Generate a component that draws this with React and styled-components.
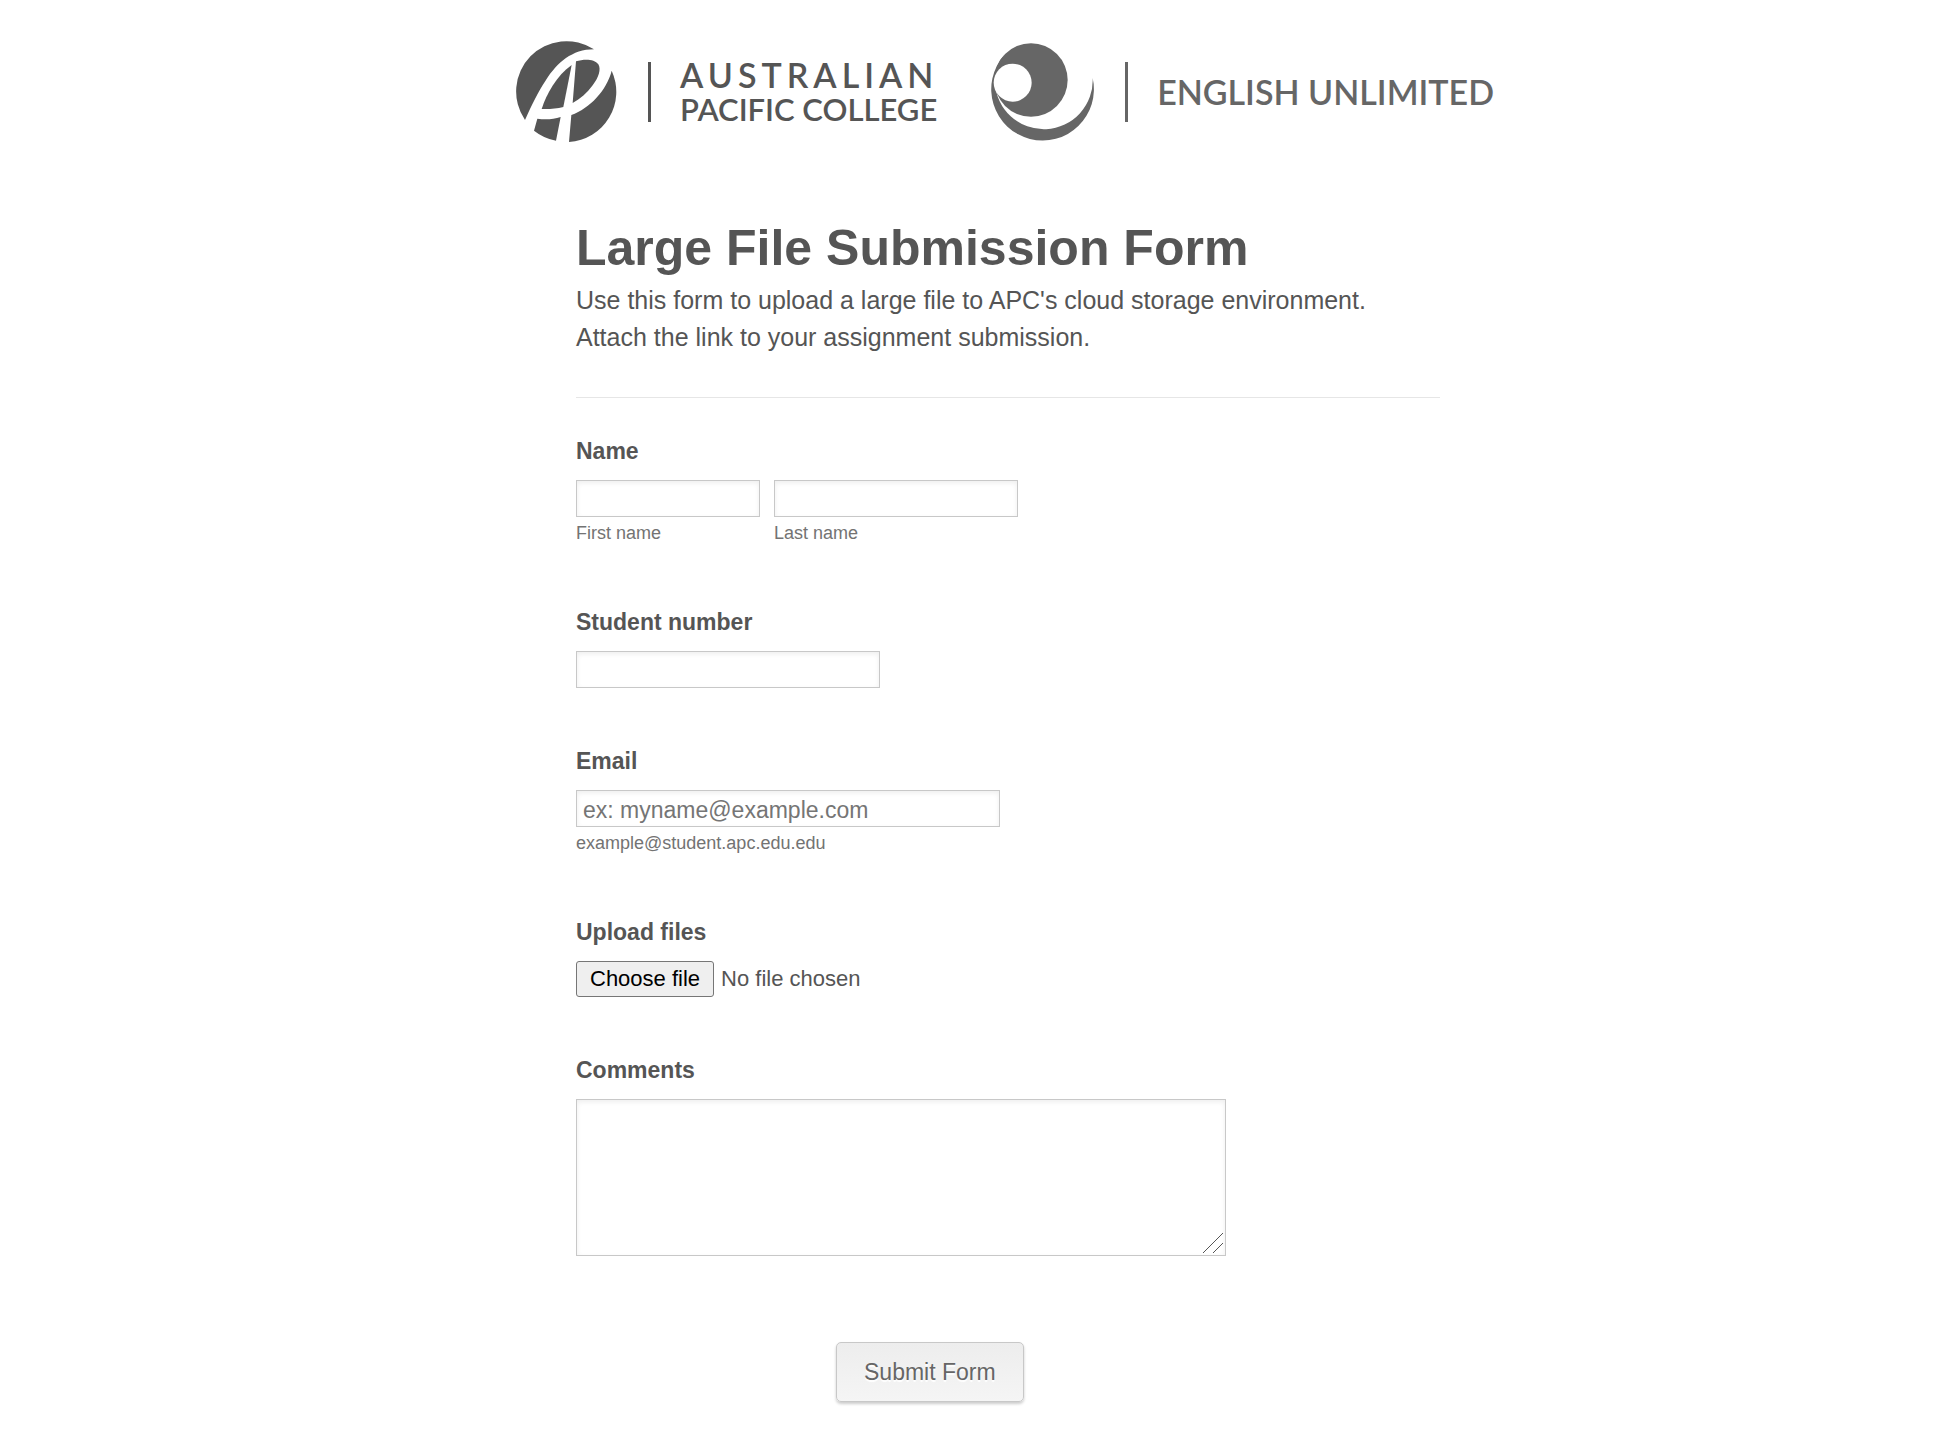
import React, { useRef, useState } from 'react';
import styled, { createGlobalStyle } from 'styled-components';

const GlobalStyle = createGlobalStyle`
  body {
    margin: 0;
    background-color: #fff;
    color: #555;
    font-family: 'Liberation Sans', Arial, sans-serif;
  }

  *, *::before, *::after {
    box-sizing: border-box;
  }

  input, textarea, button {
    font-family: inherit;
  }
`;

const Page = styled.div`
  max-width: 1051px;
  margin: 0 auto;
  padding: 41px 0 32px 67px;
`;

const Header = styled.header`
  display: flex;
  justify-content: space-between;
  align-items: center;
  padding-right: 6px;
`;

const Logo = styled.div`
  display: flex;
  align-items: center;
  color: ${(props) => props.$color};
  font-family: Lato, sans-serif;
  font-size: 34px;
  font-weight: 600;
  line-height: 34px;
  white-space: nowrap;
`;

const LogoDivider = styled.span`
  width: 3px;
  height: 60px;
  margin: 0 29px 0 31px;
  background-color: currentColor;
`;

const LogoName = styled.div`
  display: flex;
  flex-direction: column;
`;

const TrackedLine = styled.span`
  letter-spacing: 5px;
`;

const TightLine = styled.span`
  font-size: 31px;
`;

const Form = styled.form`
  margin: 78px 60px 0 60px;
`;

const FormHeader = styled.div`
  margin-bottom: 39px;
  padding-bottom: 41px;
  border-bottom: 1px solid #e6e6e6;
`;

const Title = styled.h1`
  margin: 0 0 6px;
  font-size: 50px;
  line-height: 56px;
`;

const Description = styled.p`
  margin: 0;
  font-size: 25px;
  line-height: 37px;
`;

const Field = styled.div`
  margin-bottom: 59px;
`;

const FieldGroup = styled.fieldset`
  min-width: 0;
  margin: 0 0 59px;
  padding: 0;
  border: none;
`;

const labelStyles = `
  display: block;
  margin-bottom: 15px;
  padding: 0;
  font-size: 23px;
  font-weight: bold;
  line-height: 28px;
`;

const Label = styled.label`
  ${labelStyles}
`;

const Legend = styled.legend`
  ${labelStyles}
`;

const SubLabel = styled.label`
  display: block;
  padding: 4px 0;
  color: #737373;
  font-size: 18px;
  line-height: 24px;
`;

const InputRow = styled.div`
  display: flex;
  gap: 14px;
`;

const Input = styled.input`
  display: block;
  width: ${(props) => props.$width};
  max-width: 100%;
  height: 37px;
  padding: 4px 6px 0;
  border: 1px solid #c8c8c8;
  box-shadow: inset 0 2px 5px rgba(0, 0, 0, 0.07);
  color: #555;
  font-size: 23px;

  &::placeholder {
    color: #757575;
  }
`;

const FileRow = styled.div`
  display: flex;
  align-items: center;
  gap: 7px;
  font-size: 22px;
`;

const FileInput = styled.input`
  display: none;
`;

const FileButton = styled.button`
  height: 36px;
  padding: 0 13px;
  border: 1px solid #767676;
  border-radius: 3px;
  background-color: #efefef;
  color: #000;
  font-size: 22px;
`;

const TextAreaWrapper = styled.div`
  position: relative;
  width: 650px;
  max-width: 100%;
`;

const TextArea = styled.textarea`
  display: block;
  width: 100%;
  height: 157px;
  padding: 6px;
  border: 1px solid #c8c8c8;
  box-shadow: inset 0 2px 5px rgba(0, 0, 0, 0.07);
  color: #555;
  font-size: 23px;
  resize: none;
`;

const Grip = styled.svg`
  position: absolute;
  right: 2px;
  bottom: 2px;
  pointer-events: none;
`;

const SubmitButton = styled.button`
  display: block;
  height: 60px;
  margin: 86px 0 0 260px;
  padding: 0 27px;
  border: 1px solid #c8c8c8;
  border-radius: 5px;
  background: linear-gradient(#ededed, #f5f5f5);
  box-shadow: 0 2px 3px rgba(0, 0, 0, 0.2);
  color: #666;
  font-size: 23px;
  text-shadow: 0 2px 1px #fff;
  cursor: pointer;
`;

const CollegeMark = () => (
  <svg width="101" height="101" viewBox="48 48 303 303" fill="currentColor" aria-hidden="true">
    <path d="M282 73A151 151 0 0 0 75 285C97 237 112 204 138 165C172 113 216 73 282 73Z" />
    <path d="M215 120L190 246C169 251 147 253 125 252C139 207 171 151 215 120Z" />
    <path d="M228 109C254 101 283 102 295 118C304 132 296 158 278 181C261 204 241 222 218 234Z" />
    <path d="M335 137A151 151 0 0 1 207 351L214 270C269 250 320 196 335 137Z" />
    <path d="M112 281C137 285 160 283 182 276L168 347A151 151 0 0 1 102 317Z" />
  </svg>
);

const EnglishMark = () => (
  <svg width="103" height="98" viewBox="61 52 309 294" aria-hidden="true">
    <circle cx="181" cy="163" r="110" fill="currentColor" />
    <path
      d="M366 157A154 154 0 1 1 100 89L73 171A146 146 0 1 0 366 157Z"
      fill="currentColor"
    />
    <circle cx="126" cy="171" r="57" fill="#fff" />
  </svg>
);

const App = () => {
  const fileInput = useRef(null);
  const [fileName, setFileName] = useState('');

  const handleFileChange = (e) => {
    const file = e.target.files[0];
    setFileName(file ? file.name : '');
  };

  const handleSubmit = (e) => {
    e.preventDefault();
  };

  return (
    <>
      <GlobalStyle />
      <Page>
        <Header>
          <Logo $color="#555">
            <CollegeMark />
            <LogoDivider />
            <LogoName>
              <TrackedLine>AUSTRALIAN</TrackedLine>
              <TightLine>PACIFIC COLLEGE</TightLine>
            </LogoName>
          </Logo>
          <Logo $color="#666">
            <EnglishMark />
            <LogoDivider />
            <span>ENGLISH UNLIMITED</span>
          </Logo>
        </Header>

        <Form onSubmit={handleSubmit}>
          <FormHeader>
            <Title>Large File Submission Form</Title>
            <Description>
              Use this form to upload a large file to APC's cloud storage environment.
              <br />
              Attach the link to your assignment submission.
            </Description>
          </FormHeader>

          <FieldGroup>
            <Legend>Name</Legend>
            <InputRow>
              <div>
                <Input type="text" id="firstName" name="firstName" $width="184px" />
                <SubLabel htmlFor="firstName">First name</SubLabel>
              </div>
              <div>
                <Input type="text" id="lastName" name="lastName" $width="244px" />
                <SubLabel htmlFor="lastName">Last name</SubLabel>
              </div>
            </InputRow>
          </FieldGroup>

          <Field>
            <Label htmlFor="studentNumber">Student number</Label>
            <Input type="text" id="studentNumber" name="studentNumber" $width="304px" />
          </Field>

          <Field>
            <Label htmlFor="email">Email</Label>
            <Input
              type="email"
              id="email"
              name="email"
              placeholder="ex: myname@example.com"
              $width="424px"
            />
            <SubLabel htmlFor="email">example@student.apc.edu.edu</SubLabel>
          </Field>

          <Field>
            <Label htmlFor="files">Upload files</Label>
            <FileRow>
              <FileInput
                type="file"
                id="files"
                name="files"
                ref={fileInput}
                onChange={handleFileChange}
              />
              <FileButton type="button" onClick={() => fileInput.current.click()}>
                Choose file
              </FileButton>
              <span>{fileName || 'No file chosen'}</span>
            </FileRow>
          </Field>

          <Field>
            <Label htmlFor="comments">Comments</Label>
            <TextAreaWrapper>
              <TextArea id="comments" name="comments" />
              <Grip width="24" height="24" stroke="#555" aria-hidden="true">
                <path d="M3 23L23 3M13 23L23 13" />
              </Grip>
            </TextAreaWrapper>
          </Field>

          <SubmitButton type="submit">Submit Form</SubmitButton>
        </Form>
      </Page>
    </>
  );
};

export default App;
